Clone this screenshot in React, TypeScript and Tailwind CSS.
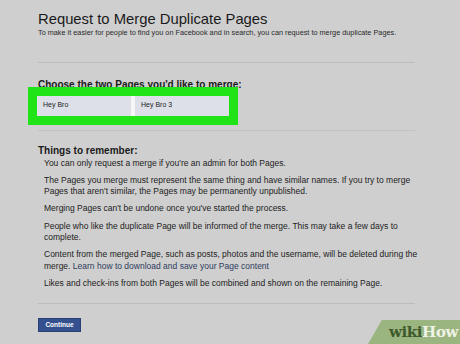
export default function App() {
  const notes = [
    "You can only request a merge if you're an admin for both Pages.",
    "The Pages you merge must represent the same thing and have similar names. If you try to merge Pages that aren't similar, the Pages may be permanently unpublished.",
    "Merging Pages can't be undone once you've started the process.",
    "People who like the duplicate Page will be informed of the merge. This may take a few days to complete.",
  ];

  return (
    <div className="relative h-[344px] w-[460px] overflow-hidden bg-[#cfcfcf] font-['Liberation_Sans',Arial,sans-serif] text-[#1e1e1e]">
      <div className="pl-[38px] pr-[45px] pt-[10px]">
        <h1 className="text-[14.8px] leading-[18px] text-[#1a1a1a]">
          Request to Merge Duplicate Pages
        </h1>
        <p className="text-[7.3px] leading-[9px] text-[#2a2a2a]">
          To make it easier for people to find you on Facebook and in search, you can request to merge duplicate Pages.
        </p>

        <div className="mt-[25px] border-t border-[#bcbcbc]" />

        <h2 className="mt-[16px] text-[10px] font-bold leading-[11px] text-[#1a1a1a]">
          Choose the two Pages you'd like to merge:
        </h2>
        <div className="relative -ml-[10px] mt-[-3.5px] flex h-[38px] w-[210px] bg-[#21e418] p-[9px]">
          <div className="flex flex-1 items-center bg-[#dde0e8] pl-[6px] text-[7px] text-[#222]">
            Hey Bro
          </div>
          <div className="w-[4px] bg-[#f6f6f6]" />
          <div className="flex flex-1 items-center bg-[#dde0e8] pl-[6px] text-[7px] text-[#222]">
            Hey Bro 3
          </div>
        </div>
        <div className="mt-[5px] border-t border-[#c2c2c2]" />

        <h2 className="mt-[14px] text-[10px] font-bold leading-[11px] text-[#1a1a1a]">
          Things to remember:
        </h2>
        <div className="-mr-[3px] pl-[6px] pt-[2px] text-[8.5px] leading-[11.3px] text-[#222]">
          {notes.map((n) => (
            <p key={n} className="mb-[6px]">
              {n}
            </p>
          ))}
          <p className="mb-[6px]">
            Content from the merged Page, such as posts, photos and the username, will be deleted during the merge.{" "}
            <span className="text-[#2e3c5e]">Learn how to download and save your Page content</span>
          </p>
          <p>Likes and check-ins from both Pages will be combined and shown on the remaining Page.</p>
        </div>

        <div className="mt-[14px] border-t border-[#bcbcbc]" />

        <button className="mt-[14px] h-[14px] w-[43px] border border-[#2a3f75] bg-[#34508f] text-[6.5px] font-bold text-white">
          Continue
        </button>
      </div>

      <div className="absolute bottom-0 right-0 flex h-[24px] w-[92px] items-center justify-end bg-[#9bb580] pr-[2px] [clip-path:polygon(15%_0,100%_0,100%_100%,0_100%)]">
        <span className="font-['DejaVu_Serif',serif] text-[15px] font-bold leading-none tracking-[-0.4px]">
          <span className="text-[#3e5a2c]">wiki</span>
          <span className="text-[#eef3e6]">How</span>
        </span>
      </div>
    </div>
  );
}
